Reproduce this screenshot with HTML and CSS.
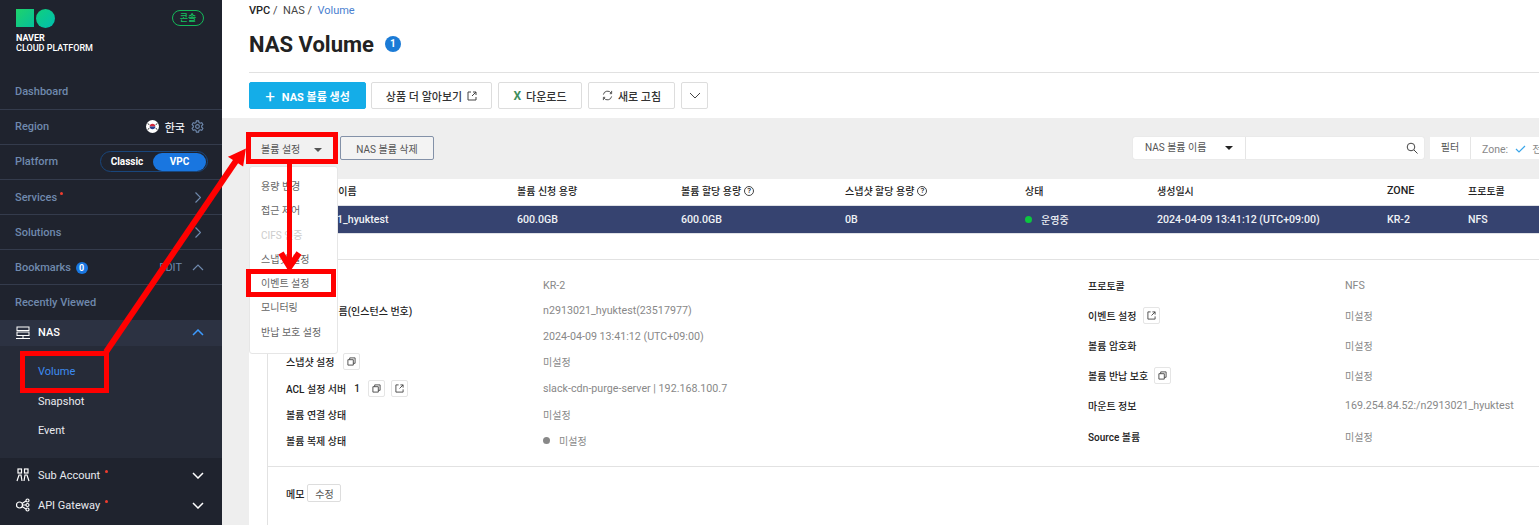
FILE: index.html
```html
<!DOCTYPE html>
<html lang="ko">
<head>
    <meta charset="UTF-8">
    <title>NAS Volume</title>
    <link rel="stylesheet" href="styles.css">
</head>
<body>
    <aside class="sidebar">
        <div class="brand">
            <div class="logo-marks">
                <span class="logo-square"></span>
                <span class="logo-circle"></span>
            </div>
            <div class="logo-text"><b>NAVER</b><br>CLOUD PLATFORM</div>
            <span class="console-badge">콘솔</span>
        </div>
        <div class="nav-row">Dashboard</div>
        <div class="nav-row">Region
            <span class="nav-right">
                <svg class="flag" width="13" height="13" viewBox="0 0 14 14">
                    <circle cx="7" cy="7" r="7" fill="#fff"/>
                    <path d="M4 7a3 3 0 0 1 6 0z" fill="#d3273a"/>
                    <path d="M4 7a3 3 0 0 0 6 0z" fill="#25408f"/>
                    <path d="M2 3.500l1.500 2M12 3.500l-1.500 2M2 10.500l1.500-2M12 10.500l-1.500-2" stroke="#333" fill="none"/>
                </svg>
                <span class="region-name">한국</span>
                <svg width="13" height="13" viewBox="0 0 14 14" fill="none" stroke="#6f89ad" stroke-width="1.200">
                    <path d="M5.800 1h2.400l.4 1.800 1.300.7 1.700-.6 1.200 2-1.300 1.300v1.600l1.300 1.300-1.200 2-1.700-.6-1.300.7-.4 1.800H5.800l-.4-1.800-1.300-.7-1.700.6-1.200-2 1.300-1.300V6.200L1.200 4.900l1.200-2 1.700.6 1.300-.7z"/>
                    <circle cx="7" cy="7" r="2"/>
                </svg>
            </span>
        </div>
        <div class="nav-row">Platform
            <div class="platform-toggle">
                <span class="toggle-opt">Classic</span>
                <span class="toggle-opt toggle-on">VPC</span>
            </div>
        </div>
        <div class="nav-row nav-row-low"><span>Services<i class="red-dot"></i></span>
            <svg class="nav-chevron nav-chevron-side" width="6" height="11" viewBox="0 0 6 11"><path d="M.5 .5l5 5-5 5"/></svg>
        </div>
        <div class="nav-row nav-row-low">Solutions
            <svg class="nav-chevron nav-chevron-side" width="6" height="11" viewBox="0 0 6 11"><path d="M.5 .5l5 5-5 5"/></svg>
        </div>
        <div class="nav-row nav-row-low"><span>Bookmarks <b class="count-badge">0</b></span>
            <span class="nav-right">
                <span class="edit-link">EDIT</span>
                <svg class="nav-chevron" width="12" height="7" viewBox="0 0 12 7"><path d="M1 6l5-5 5 5"/></svg>
            </span>
        </div>
        <div class="nav-row nav-last">Recently Viewed</div>
        <div class="product-row product-open">
            <svg class="product-icon" width="14" height="14" viewBox="0 0 14 14" fill="none" stroke="#fff">
                <rect x="1" y="1" width="12" height="3.500"/>
                <rect x="1" y="6" width="12" height="3.500"/>
                <path d="M0 12.500h14M7 9.500v3"/>
            </svg>
            <span class="product-name">NAS</span>
            <svg class="chevron-blue" width="12" height="7" viewBox="0 0 12 7"><path d="M1 6l5-5 5 5"/></svg>
        </div>
        <div class="submenu">
            <div class="submenu-item submenu-active">Volume</div>
            <div class="submenu-item">Snapshot</div>
            <div class="submenu-item">Event</div>
        </div>
        <div class="product-row">
            <svg class="product-icon" width="14" height="14" viewBox="0 0 14 14" fill="none" stroke="#fff" stroke-width="1.200">
                <rect x="2" y="1" width="3.500" height="4"/>
                <rect x="8.500" y="1" width="3.500" height="4"/>
                <path d="M1 13l2-6h2l1 6M8 13l1-6h2l2 6"/>
            </svg>
            <span class="product-name">Sub Account<i class="red-dot red-dot-wide"></i></span>
            <svg class="chevron-white" width="12" height="7" viewBox="0 0 12 7"><path d="M1 1l5 5 5-5"/></svg>
        </div>
        <div class="product-row">
            <svg class="product-icon" width="14" height="14" viewBox="0 0 14 14" fill="none" stroke="#fff" stroke-width="1.200">
                <circle cx="3.500" cy="7" r="3"/>
                <circle cx="11.500" cy="2.500" r="1.500"/>
                <circle cx="11.500" cy="7" r="1.500"/>
                <circle cx="11.500" cy="11.500" r="1.500"/>
                <path d="M6.500 7H10M6 5.500l4-2.500M6 8.500l4 2.500"/>
            </svg>
            <span class="product-name">API Gateway<i class="red-dot red-dot-wide"></i></span>
            <svg class="chevron-white" width="12" height="7" viewBox="0 0 12 7"><path d="M1 1l5 5 5-5"/></svg>
        </div>
    </aside>

    <main class="content">
        <div class="breadcrumb"><b>VPC</b> /&nbsp; NAS /&nbsp; <span class="crumb-current">Volume</span></div>
        <div class="title-row">
            <h1>NAS Volume</h1>
            <span class="title-count">1</span>
        </div>
        <div class="toolbar">
            <button class="btn btn-primary"><span class="plus">+</span>NAS 볼륨 생성</button>
            <button class="btn btn-learn">상품 더 알아보기
                <svg class="ext" width="10" height="10" viewBox="0 0 10 10"><path d="M4 1H1v8h8V6M5 5l4-4M6 1h3v3"/></svg>
            </button>
            <button class="btn btn-download"><span class="excel">X</span>다운로드</button>
            <button class="btn btn-refresh">
                <svg class="ext" width="11" height="11" viewBox="0 0 12 12"><path d="M1.500 5A4.600 4.600 0 0 1 10 3.500M10.500 7A4.600 4.600 0 0 1 2 8.500M10.500 1v3h-2M1.500 11V8h2"/></svg>
                새로 고침
            </button>
            <button class="btn btn-more">
                <svg class="ext" width="12" height="7" viewBox="0 0 12 7"><path d="M1 1l5 5 5-5"/></svg>
            </button>
        </div>

        <div class="panel">
            <div class="filters">
                <button class="volume-btn">볼륨 설정<i class="caret"></i></button>
                <button class="delete-btn">NAS 볼륨 삭제</button>
                <div class="search-box">
                    <div class="search-select">NAS 볼륨 이름<i class="caret caret-dark"></i></div>
                    <div class="search-input">
                        <svg class="ext" width="12" height="12" viewBox="0 0 12 12"><circle cx="5" cy="5" r="3.800"/><path d="M8 8l3.500 3.500"/></svg>
                    </div>
                </div>
                <div class="filter-box">
                    <span class="filter-label">필터</span>
                    <span class="filter-zone">Zone:
                        <svg class="check" width="11" height="8" viewBox="0 0 11 8"><path d="M1 4l3 3 6-6"/></svg>
                        전체
                    </span>
                </div>
            </div>

            <div class="sheet">
                <div class="table-head">
                    <span class="name-cell">NAS 볼륨 이름</span>
                    <span>볼륨 신청 용량</span>
                    <span class="head-help">볼륨 할당 용량 <i class="help">?</i></span>
                    <span class="head-help">스냅샷 할당 용량 <i class="help">?</i></span>
                    <span>상태</span>
                    <span>생성일시</span>
                    <span class="latin">ZONE</span>
                    <span>프로토콜</span>
                </div>
                <div class="table-row">
                    <span class="name-cell">n2913021_hyuktest</span>
                    <span>600.0GB</span>
                    <span>600.0GB</span>
                    <span>0B</span>
                    <span class="status-cell"><i class="dot dot-green"></i>운영중</span>
                    <span>2024-04-09 13:41:12 (UTC+09:00)</span>
                    <span>KR-2</span>
                    <span>NFS</span>
                </div>

                <div class="detail">
                    <div class="detail-grid">
                        <div class="detail-col detail-col-left">
                            <div class="detail-row"><span class="label">ZONE</span><span class="value latin">KR-2</span></div>
                            <div class="detail-row"><span class="label">NAS 볼륨 이름(인스턴스 번호)</span><span class="value latin">n2913021_hyuktest(23517977)</span></div>
                            <div class="detail-row"><span class="label">생성일시</span><span class="value latin">2024-04-09 13:41:12 (UTC+09:00)</span></div>
                            <div class="detail-row"><span class="label">스냅샷 설정 <i class="icon-btn icon-btn-gap"><svg class="ext" width="9" height="9" viewBox="0 0 10 10"><path d="M3 3V1h6v6H7M1 3h6v6H1z"/></svg></i></span><span class="value">미설정</span></div>
                            <div class="detail-row row-tall"><span class="label">ACL 설정 서버 <b class="acl-count">1</b> <i class="icon-btn icon-btn-gap"><svg class="ext" width="9" height="9" viewBox="0 0 10 10"><path d="M3 3V1h6v6H7M1 3h6v6H1z"/></svg></i><i class="icon-btn"><svg class="ext" width="9" height="9" viewBox="0 0 10 10"><path d="M4 1H1v8h8V6M5 5l4-4M6 1h3v3"/></svg></i></span><span class="value latin">slack-cdn-purge-server | 192.168.100.7</span></div>
                            <div class="detail-row"><span class="label">볼륨 연결 상태</span><span class="value">미설정</span></div>
                            <div class="detail-row"><span class="label">볼륨 복제 상태</span><span class="value"><i class="dot dot-gray"></i>미설정</span></div>
                        </div>
                        <div class="detail-col detail-col-right">
                            <div class="detail-row"><span class="label">프로토콜</span><span class="value latin">NFS</span></div>
                            <div class="detail-row"><span class="label">이벤트 설정 <i class="icon-btn"><svg class="ext" width="9" height="9" viewBox="0 0 10 10"><path d="M4 1H1v8h8V6M5 5l4-4M6 1h3v3"/></svg></i></span><span class="value">미설정</span></div>
                            <div class="detail-row"><span class="label">볼륨 암호화</span><span class="value">미설정</span></div>
                            <div class="detail-row"><span class="label">볼륨 반납 보호 <i class="icon-btn"><svg class="ext" width="9" height="9" viewBox="0 0 10 10"><path d="M3 3V1h6v6H7M1 3h6v6H1z"/></svg></i></span><span class="value">미설정</span></div>
                            <div class="detail-row"><span class="label">마운트 정보</span><span class="value latin">169.254.84.52:/n2913021_hyuktest</span></div>
                            <div class="detail-row"><span class="label">Source 볼륨</span><span class="value">미설정</span></div>
                        </div>
                    </div>
                    <div class="memo"><span class="label-memo">메모</span><button class="memo-btn">수정</button></div>
                </div>
            </div>
        </div>
    </main>

    <!-- dropdown lies over the table -->
    <ul class="dropdown">
        <li>용량 변경</li>
        <li>접근 제어</li>
        <li class="disabled">CIFS 인증</li>
        <li>스냅샷 설정</li>
        <li>이벤트 설정</li>
        <li>모니터링</li>
        <li>반납 보호 설정</li>
    </ul>

    <!-- red annotations drawn on the screenshot -->
    <svg class="annotations" width="1539" height="525" viewBox="0 0 1539 525" fill="none" stroke="#ff0000" stroke-width="5">
        <rect x="22.500" y="353.500" width="84" height="37"/>
        <rect x="248.500" y="134.500" width="87" height="27"/>
        <rect x="248.500" y="271.500" width="85" height="23"/>
        <path d="M106 352L240 155" stroke-width="6"/>
        <path d="M231 157L244 151L242 164Z" fill="#ff0000" stroke-width="3"/>
        <path d="M289.500 163V266"/>
        <path d="M281 253L289.500 267L299 253" stroke-width="6"/>
    </svg>
</body>
</html>
```

FILE: styles.css
```css
* {
    box-sizing: border-box;
}
html, body {
    height: 100%;
}
body {
    margin: 0;
    display: flex;
    overflow: hidden;
    background: #fff;
    color: #222;
    font-family: Roboto, "Noto Sans CJK KR", sans-serif;
    font-size: 11px;
}
i {
    font-style: normal;
}

/* sidebar */
.sidebar {
    width: 222px;
    height: 525px;
    flex-shrink: 0;
    background: #1f232e;
    color: #6f89ad;
    font-size: 11px;
    font-weight: 500;
}
.brand {
    height: 75px;
    padding: 9px 18px 0 16px;
    position: relative;
}
.logo-marks {
    display: flex;
    gap: 2px;
}
.logo-square {
    width: 18px;
    height: 18px;
    background: linear-gradient(135deg, #1fd36b, #04c09b);
}
.logo-circle {
    width: 19px;
    height: 19px;
    border-radius: 50%;
    background: linear-gradient(135deg, #10d07c, #00bdb0);
}
.logo-text {
    margin-top: 5px;
    color: #fff;
    font-size: 9px;
    line-height: 10px;
    font-weight: 500;
    letter-spacing: 0;
}
.console-badge {
    position: absolute;
    top: 10px;
    right: 18px;
    width: 32px;
    height: 16px;
    border: 1px solid #14b85a;
    border-radius: 8px;
    color: #14c060;
    font-size: 9px;
    line-height: 14px;
    text-align: center;
}
.nav-row {
    height: 35px;
    padding: 0 18px 1px 15px;
    border-bottom: 1px solid #343b4c;
    display: flex;
    align-items: center;
    justify-content: space-between;
}
.nav-row-low {
    padding-bottom: 0;
}
.nav-last {
    border-bottom: none;
}
.nav-right {
    display: flex;
    align-items: center;
    gap: 6px;
}
.region-name {
    color: #e8eaee;
}
.platform-toggle {
    width: 108px;
    height: 21px;
    margin-right: -4px;
    border: 1px solid #19467c;
    border-radius: 11px;
    display: flex;
    align-items: center;
    color: #fff;
    font-size: 10px;
    font-weight: 700;
}
.toggle-opt {
    flex: 1;
    text-align: center;
}
.toggle-on {
    flex: none;
    width: 53px;
    height: 18px;
    line-height: 18px;
    margin-right: 1px;
    background: #1976e0;
    border-radius: 9px;
}
.red-dot {
    display: inline-block;
    width: 3px;
    height: 3px;
    margin-left: 3px;
    vertical-align: 6px;
    border-radius: 50%;
    background: #f03c2e;
}
.red-dot-wide {
    margin-left: 5px;
}
.count-badge {
    display: inline-block;
    width: 12px;
    height: 12px;
    margin-left: 2px;
    border-radius: 50%;
    background: #1976e0;
    color: #fff;
    font-size: 9px;
    line-height: 12px;
    text-align: center;
}
.edit-link {
    margin-right: 4px;
    font-weight: 400;
}
.nav-chevron {
    fill: none;
    stroke: #6f89ad;
    stroke-width: 1.200;
}
.nav-chevron-side {
    margin-right: 3px;
}
.product-row {
    height: 30px;
    padding: 0 18px 0 16px;
    display: flex;
    align-items: center;
    color: #e8eaee;
    font-weight: 400;
}
.product-open {
    height: 26px;
    padding-bottom: 1px;
    background: #2c3242;
    color: #fff;
    font-weight: 500;
}
.product-icon {
    margin-right: 8px;
}
.product-name {
    flex: 1;
}
.chevron-blue, .chevron-white {
    fill: none;
    stroke-width: 1.500;
}
.chevron-blue {
    stroke: #3d9bff;
}
.chevron-white {
    stroke: #fff;
}
.submenu {
    height: 112px;
    padding-top: 11px;
    background: #262b38;
    margin-bottom: 2px;
}
.submenu-item {
    height: 29.500px;
    line-height: 29.500px;
    padding-left: 38px;
    color: #e8eaee;
    font-weight: 400;
}
.submenu-active {
    color: #3d8bf2;
}

/* main column */
.content {
    flex: 1;
    min-width: 0;
    display: flex;
    flex-direction: column;
}
.breadcrumb {
    height: 24px;
    padding: 4px 0 0 27px;
    font-size: 11px;
    line-height: 14px;
    color: #444;
}
.breadcrumb b {
    font-weight: 500;
    color: #222;
}
.crumb-current {
    color: #4a7fd0;
}
.title-row {
    height: 49px;
    margin-left: 27px;
    padding-bottom: 8px;
    border-bottom: 1px solid #e1e1e1;
    display: flex;
    align-items: center;
    gap: 11px;
}
h1 {
    margin: 0;
    font-size: 22px;
    font-weight: 700;
    color: #222;
}
.title-count {
    width: 16px;
    height: 16px;
    border-radius: 50%;
    background: #1b7bd6;
    color: #fff;
    font-size: 10px;
    font-weight: 700;
    line-height: 16px;
    text-align: center;
}
.toolbar {
    height: 45px;
    padding: 9px 0 0 27px;
    display: flex;
    align-items: flex-start;
    gap: 6px;
}
.btn {
    height: 27px;
    padding: 0;
    background: #fff;
    border: 1px solid #ddd;
    border-radius: 2px;
    color: #333;
    font-family: inherit;
    font-size: 11px;
    font-weight: 500;
    display: flex;
    align-items: center;
    justify-content: center;
    gap: 5px;
}
.btn-primary {
    width: 117px;
    margin-right: -1px;
    background: #14ade8;
    border-color: #14ade8;
    color: #fff;
    font-weight: 700;
}
.btn-learn {
    width: 121px;
}
.btn-download {
    width: 84px;
}
.btn-refresh {
    width: 87px;
}
.plus {
    font-size: 17px;
    font-weight: 400;
    line-height: 20px;
    margin-right: 2px;
}
.btn-more {
    width: 27px;
}
.excel {
    color: #3f8f5e;
    font-size: 12px;
    font-weight: 700;
}
.ext {
    fill: none;
    stroke: #444;
    stroke-width: 1;
}

/* grey panel */
.panel {
    flex: 1;
    min-height: 0;
    padding-left: 27px;
    background: #eee;
    display: flex;
    flex-direction: column;
}
.filters {
    height: 61px;
    padding: 18px 0 0 0;
    display: flex;
    align-items: flex-start;
}
.volume-btn {
    width: 84px;
    height: 24px;
    margin-left: 2px;
    padding: 0 0 0 10px;
    background: #f1f1f1;
    border: none;
    color: #555;
    font-family: inherit;
    font-size: 10px;
    text-align: left;
}
.caret {
    display: inline-block;
    margin-left: 14px;
    vertical-align: 1px;
    border: 4px solid transparent;
    border-top: 4px solid #555;
    border-bottom: none;
}
.caret-dark {
    border-top-color: #222;
    margin-left: 19px;
}
.delete-btn {
    width: 94px;
    height: 24px;
    margin-left: 5px;
    background: #f3f3f3;
    border: 1px solid #8391a8;
    border-radius: 2px;
    color: #555;
    font-family: inherit;
    font-size: 10px;
}
.search-box {
    width: 291px;
    height: 22px;
    margin: 1px 0 0 auto;
    background: #fff;
    border-radius: 2px;
    display: flex;
    box-shadow: 0 0 1px #ccc;
}
.search-select {
    width: 113px;
    padding-left: 12px;
    border-right: 1px solid #e5e5e5;
    line-height: 21px;
    font-size: 10px;
    color: #555;
}
.search-input {
    flex: 1;
    padding-right: 6px;
    display: flex;
    align-items: center;
    justify-content: flex-end;
}
.filter-box {
    width: 109px;
    height: 22px;
    margin: 1px 0 0 6px;
    background: #fff;
    display: flex;
    align-items: center;
    white-space: nowrap;
    font-size: 10px;
    color: #555;
    overflow: hidden;
    flex-shrink: 0;
}
.filter-label {
    flex-shrink: 0;
    width: 41px;
    height: 22px;
    line-height: 22px;
    text-align: center;
    border-right: 1px solid #e5e5e5;
}
.filter-zone {
    padding-left: 11px;
    color: #888;
    font-size: 10.500px;
}
.check {
    margin: 0 4px;
    fill: none;
    stroke: #3aa6ea;
    stroke-width: 1.200;
}
.sheet {
    flex: 1;
    min-height: 0;
    min-width: 0;
    background: #fff;
    overflow: hidden;
}
.table-head, .table-row {
    display: grid;
    grid-template-columns: 229px 164px 164px 180px 132px 230px 81px 80px;
    align-items: center;
    white-space: nowrap;
    padding-left: 39px;
}
.table-head {
    height: 27px;
    padding-bottom: 3px;
    border-bottom: 1px solid #dfe1e6;
    font-size: 10px;
    font-weight: 500;
    color: #222;
}
.table-row {
    height: 28px;
    background: #364370;
    color: #f0f2f6;
    font-size: 10.600px;
    font-weight: 500;
    border-bottom: 1px solid #dfe1e6;
}
.name-cell {
    padding-left: 7px;
}
.latin {
    font-size: 10.700px;
}
.head-help {
    display: flex;
    align-items: center;
    gap: 3px;
}
.help {
    display: inline-block;
    width: 10px;
    height: 10px;
    border: 1px solid #444;
    border-radius: 50%;
    font-size: 8px;
    line-height: 8px;
    text-align: center;
}
.status-cell {
    display: flex;
    align-items: center;
    font-size: 10px;
}
.dot {
    display: inline-block;
    width: 7px;
    height: 7px;
    margin-right: 9px;
    border-radius: 50%;
}
.dot-green {
    background: #0cc63f;
}
.dot-gray {
    background: #888;
}
.detail {
    width: 1272px;
    margin: 25px 0 0 18px;
    height: 266px;
    border-top: 1px solid #e2e2e2;
    border-left: 1px solid #e2e2e2;
}
.detail-grid {
    height: 207px;
    padding: 10px 0 0 18px;
    border-bottom: 1px solid #e2e2e2;
    display: flex;
}
.detail-col {
    flex-shrink: 0;
    width: 802px;
}
.detail-col-left {
    padding-top: 3px;
}
.detail-col-right {
    width: 451px;
}
.detail-col-right .detail-row {
    height: 30.200px;
}
.detail-row {
    height: 25.300px;
    display: flex;
    align-items: center;
    white-space: nowrap;
}
.row-tall {
    height: 28px;
}
.label {
    width: 257px;
    font-size: 10px;
    font-weight: 500;
    color: #222;
    display: flex;
    align-items: center;
    gap: 5px;
}
.acl-count {
    margin-left: 3px;
    font-weight: 500;
}
.value {
    font-size: 10px;
    color: #888;
    display: flex;
    align-items: center;
}
.value.latin {
    font-size: 10.700px;
}
.icon-btn {
    width: 17px;
    height: 17px;
    margin-left: 1px;
    border: 1px solid #e5e5e5;
    border-radius: 2px;
    display: inline-flex;
    align-items: center;
    justify-content: center;
}
.icon-btn-gap {
    margin-left: 3px;
}
.memo {
    padding: 17px 0 0 18px;
    display: flex;
    align-items: center;
    gap: 3px;
}
.label-memo {
    font-size: 10px;
    font-weight: 500;
}
.memo-btn {
    width: 34px;
    height: 18px;
    padding: 0;
    background: #fff;
    border: 1px solid #ddd;
    border-radius: 2px;
    color: #555;
    font-family: inherit;
    font-size: 10px;
}

/* dropdown */
.dropdown {
    position: absolute;
    left: 249px;
    top: 166px;
    width: 89px;
    height: 188px;
    margin: 0;
    padding: 8px 0 0 11px;
    list-style: none;
    background: #fff;
    border: 1px solid #e6e6e6;
    border-radius: 3px;
    color: #666;
    font-size: 10px;
}
.dropdown li {
    height: 24.300px;
    line-height: 24px;
    white-space: nowrap;
}
.dropdown .disabled {
    color: #ccc;
}

.annotations {
    position: absolute;
    left: 0;
    top: 0;
    pointer-events: none;
}
```
